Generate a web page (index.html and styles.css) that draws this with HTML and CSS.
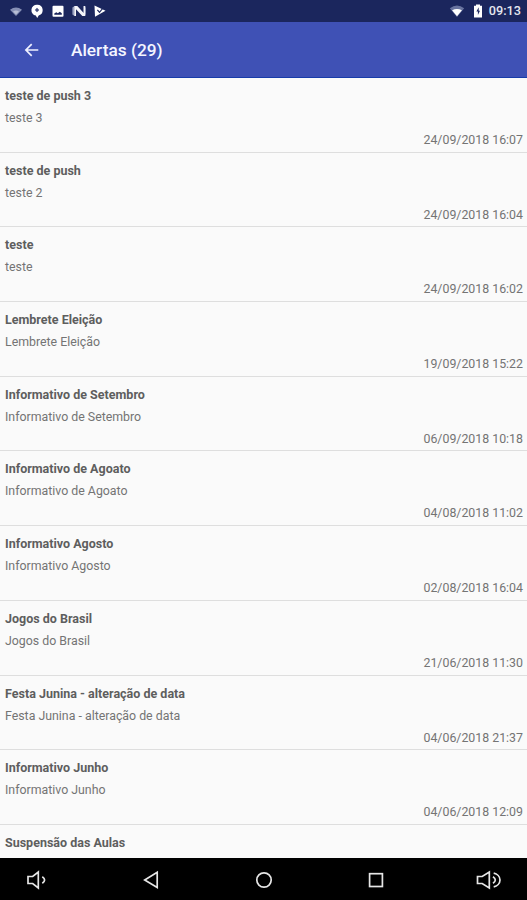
FILE: index.html
```html
<!DOCTYPE html>
<html lang="pt-BR">
<head>
<meta charset="utf-8">
<title>Alertas</title>
<link rel="stylesheet" href="styles.css">
</head>
<body>
<div class="screen">
  <header class="status">
    <div class="status-icons">
      <svg class="ico" viewBox="0 0 14 14"><path d="M1 5.8Q7 1.4 13 5.8L7 12Z" fill="#8790b5"/><path d="M4 7.4Q7 5.5 10 7.4L7 10.5Z" fill="#b7bdd4"/></svg>
      <svg class="ico" viewBox="0 0 14 14"><path d="M7 .8a5.4 5.4 0 0 0-1.2 10.7L7.2 14l1.5-2.6A5.4 5.4 0 0 0 7 .8Z" fill="#fff"/><path d="M7 3.7l2.2 2.2L7 8.2 4.9 5.9Z" fill="#47507e"/></svg>
      <svg class="ico" viewBox="0 0 14 14"><rect x="1.5" y="1.8" width="11" height="11" rx="1" fill="#fff"/><path d="M3.3 10.8V9.4l2-1.2 1.5 1 2-1.4 2 1.5v1.5Z" fill="#1b265d"/></svg>
      <svg class="ico" viewBox="0 0 14 14"><path d="M.4 3.5L2.5 2v10L.4 10.5ZM11.5 2l2.1 1.5v7L11.5 12Z" fill="#9ba3c2"/><path d="M2.3 2h3l6.4 7V2h1.6v10h-3L4 5.2V12H2.3Z" fill="#f4f5fa"/></svg>
      <svg class="ico" viewBox="0 0 14 14"><path d="M1.5 1.5l11 5.2-10.5 6Z" fill="#fff"/><path d="M4.4 5.8l2.1 2.6L10.8 3" fill="none" stroke="#1b265d" stroke-width="1.2"/></svg>
    </div>
    <div class="status-right">
      <svg class="wifi" viewBox="0 0 16 14"><path d="M.8 4.3Q8-1.1 15.2 4.3L8 13Z" fill="#68739f"/><path d="M3.1 6.2Q8 3.7 12.9 6.2L8 12.2Z" fill="#fff"/></svg>
      <svg class="battery" viewBox="0 0 10 14"><path d="M3 .5h4v1.3h2v11.7H1V1.8h2Z" fill="#fff"/><path d="M5.7 3.2L3.4 7.6h1.5v3.5L7 6.8H5.7Z" fill="#1b265d"/></svg>
      <span class="clock">09:13</span>
    </div>
  </header>
  <div class="appbar">
    <svg class="back" viewBox="0 0 16 16"><path d="M14.3 8H2M7.7 2.2L1.9 8l5.8 5.8" fill="none" stroke="#eef0ff" stroke-width="1.7"/></svg>
    <h1 class="title">Alertas (29)</h1>
  </div>
  <main class="list">
    <article class="item"><h2>teste de push 3</h2><p>teste 3</p><time>24/09/2018 16:07</time></article>
    <article class="item"><h2>teste de push</h2><p>teste 2</p><time>24/09/2018 16:04</time></article>
    <article class="item"><h2>teste</h2><p>teste</p><time>24/09/2018 16:02</time></article>
    <article class="item"><h2>Lembrete Eleição</h2><p>Lembrete Eleição</p><time>19/09/2018 15:22</time></article>
    <article class="item"><h2>Informativo de Setembro</h2><p>Informativo de Setembro</p><time>06/09/2018 10:18</time></article>
    <article class="item"><h2>Informativo de Agoato</h2><p>Informativo de Agoato</p><time>04/08/2018 11:02</time></article>
    <article class="item"><h2>Informativo Agosto</h2><p>Informativo Agosto</p><time>02/08/2018 16:04</time></article>
    <article class="item"><h2>Jogos do Brasil</h2><p>Jogos do Brasil</p><time>21/06/2018 11:30</time></article>
    <article class="item"><h2>Festa Junina - alteração de data</h2><p>Festa Junina - alteração de data</p><time>04/06/2018 21:37</time></article>
    <article class="item"><h2>Informativo Junho</h2><p>Informativo Junho</p><time>04/06/2018 12:09</time></article>
    <article class="item"><h2>Suspensão das Aulas</h2></article>
  </main>
  <nav class="navbar">
    <svg viewBox="0 0 28 24"><path d="M4 8.5h4.7L14.3 4v16l-5.6-4.5H4Z"/><path d="M18.3 8.8q4.6 3.2 0 6.4"/></svg>
    <svg viewBox="0 0 28 24"><path d="M20.2 4.3v15.2L7.7 11.9Z"/></svg>
    <svg viewBox="0 0 28 24"><circle cx="14" cy="12" r="7.2"/></svg>
    <svg viewBox="0 0 28 24"><rect x="7.6" y="5.7" width="12.8" height="12.8"/></svg>
    <svg viewBox="0 0 28 24"><path d="M2.5 8.5h4.7L14.3 4v16l-7.1-4.5H2.5Z"/><path d="M18 8.8q4.6 3.2 0 6.4M18.7 5.2c3.4.7 6.3 3.4 6.3 6.8s-2.9 6.1-6.3 6.8"/></svg>
  </nav>
</div>
</body>
</html>
```
FILE: styles.css
```css
* { box-sizing: border-box; }
body { margin: 0; font-family: Roboto, "Liberation Sans", sans-serif; }
.screen { width: 527px; height: 900px; display: flex; flex-direction: column; overflow: hidden; background: #fafafa; }
.status { height: 22px; flex: none; display: flex; justify-content: space-between; background: #1b265d; padding: 0 6px 0 9px; }
.status-icons { display: flex; align-items: center; gap: 7px; }
.ico { width: 14px; height: 14px; }
.status-right { display: flex; align-items: center; }
.wifi { width: 16px; height: 14px; margin-right: 8px; }
.battery { width: 10px; height: 14px; margin-right: 6px; }
.clock { color: #e4e6ef; font-size: 12.7px; font-weight: 500; line-height: 22px; }
.appbar { height: 56px; flex: none; display: flex; align-items: center; padding-left: 24px; background: #3f51b5; border-bottom: 1px solid #173caa; }
.back { width: 16px; height: 16px; margin-right: 31px; }
.title { margin: 0; color: #f5f6ff; font-size: 17.3px; font-weight: 500; line-height: 24px; }
.list { flex: 1; min-height: 0; overflow: hidden; }
.item { height: 74.7px; padding: 7px 4px 0 5px; border-bottom: 1px solid #dedede; color: #747474; font-size: 12.35px; line-height: 22px; }
.item h2, .item p { margin: 0; }
.item h2 { color: #5e5e5e; font-size: 12.5px; font-weight: 700; }
.item time { display: block; text-align: right; }
.navbar { height: 42px; flex: none; display: flex; justify-content: space-between; align-items: center; padding: 1px 24px 0; background: #000; }
.navbar svg { width: 28px; height: 24px; fill: none; stroke: #e6e6e6; stroke-width: 1.7; }
```
